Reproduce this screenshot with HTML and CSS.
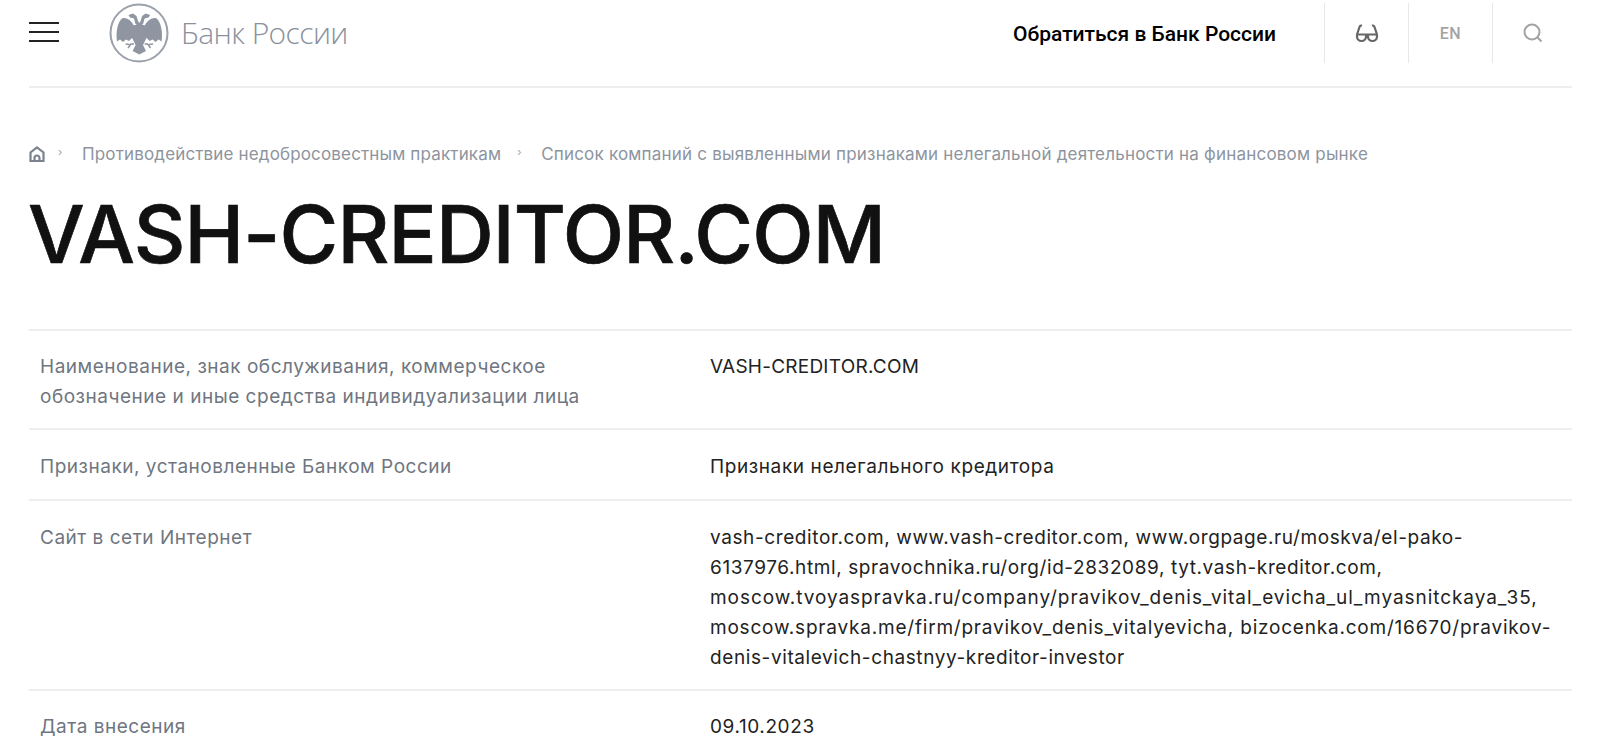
FILE: index.html
```html
<!DOCTYPE html>
<html lang="ru">
<head>
  <meta charset="UTF-8" />
  <title>VASH-CREDITOR.COM</title>
  <link rel="stylesheet" href="styles.css">
</head>
<body>
  <header class="header">
    <div class="header-left">
      <button class="burger"><span></span><span></span><span></span></button>
      <a class="logo">
        <svg class="logo-mark" width="60" height="60" viewBox="0 0 60 60">
          <circle cx="30" cy="30" r="28.5" fill="none" stroke="#9aa1ab" stroke-width="2"/>
          <g fill="#8f96a2">
            <!-- heads -->
            <path d="M30.300 24L26.500 21 25 15.500 21 14.500 19.500 12 24 10.500 27.500 13 29 18 30.300 20 31.600 18 33.100 13 36.600 10.500 41.100 12 39.600 14.500 35.600 15.500 34.100 21z"/>
            <!-- wings -->
            <path d="M25 23C22 17 17 14 13 15.500 9 19 6.500 28 8 38.500L11 36.500 14 39 17 36.500 20 38 25 33z"/>
            <path d="M35.600 23C38.600 17 43.600 14 47.600 15.500 51.600 19 54.100 28 52.600 38.500L49.600 36.500 46.600 39 43.600 36.500 40.600 38 35.600 33z"/>
            <!-- body and tail -->
            <path d="M25 22H35.600L38 34 34 42 37 48 30.300 51.500 23.600 48 26.600 42 22.600 34z"/>
          </g>
          <path d="M19 45l3-4 3 0M16.500 41l4 .5M41.600 45l-3-4-3 0M44.100 41l-4 .5" fill="none" stroke="#8f96a2" stroke-width="1.500"/>
        </svg>
        <span class="logo-text">Банк России</span>
      </a>
    </div>
    <nav class="header-right">
      <a class="contact">Обратиться в Банк России</a>
      <div class="tool">
        <svg width="24" height="20" viewBox="0 0 24 20" fill="none" stroke="#666" stroke-width="2.200">
          <path d="M1.500 11.500h21M2 11.500v2a4.500 4.500 0 0 0 9 0v-2M13 11.500v2a4.500 4.500 0 0 0 9 0v-2"/>
          <path d="M2 11.500L4.500 4q.7-2 2.500-1.300M22 11.500L19.500 4q-.7-2-2.500-1.300"/>
        </svg>
      </div>
      <div class="tool lang">EN</div>
      <div class="tool">
        <svg width="22" height="22" viewBox="0 0 22 22" fill="none" stroke="#a3a3a3" stroke-width="2">
          <circle cx="10" cy="10" r="7.500"/>
          <path d="M15.500 15.500l4 4"/>
        </svg>
      </div>
    </nav>
  </header>

  <main class="content">
    <div class="crumbs">
      <svg class="home" width="16" height="16" viewBox="0 0 16 16" fill="none" stroke="#7b8390" stroke-width="2.200">
        <path d="M1.500 15V6.500L8 1.500l6.500 5V15z"/>
        <path d="M5.500 15v-3a2.500 2.500 0 0 1 5 0v3"/>
      </svg>
      <span class="sep">›</span>
      <a>Противодействие недобросовестным практикам</a>
      <span class="sep">›</span>
      <a class="crumb-long">Список компаний с выявленными признаками нелегальной деятельности на финансовом рынке</a>
    </div>

    <h1>VASH-CREDITOR.COM</h1>

    <div class="rows">
      <div class="row">
        <div class="label">Наименование, знак обслуживания, коммерческое обозначение и иные средства индивидуализации лица</div>
        <div class="value caps">VASH-CREDITOR.COM</div>
      </div>
      <div class="row">
        <div class="label">Признаки, установленные Банком России</div>
        <div class="value">Признаки нелегального кредитора</div>
      </div>
      <div class="row row-long">
        <div class="label">Сайт в сети Интернет</div>
        <div class="value">
          <div>vash-creditor.com, www.vash-creditor.com, www.orgpage.ru/moskva/el-pako-</div>
          <div>6137976.html, spravochnika.ru/org/id-2832089, tyt.vash-kreditor.com,</div>
          <div class="wide">moscow.tvoyaspravka.ru/company/pravikov_denis_vital_evicha_ul_myasnitckaya_35,</div>
          <div class="wider">moscow.spravka.me/firm/pravikov_denis_vitalyevicha, bizocenka.com/16670/pravikov-</div>
          <div>denis-vitalevich-chastnyy-kreditor-investor</div>
        </div>
      </div>
      <div class="row row-last">
        <div class="label">Дата внесения</div>
        <div class="value">09.10.2023</div>
      </div>
    </div>
  </main>
</body>
</html>
```

FILE: styles.css
```css
html, body {
  height: 755px;
  overflow: hidden;
}

body {
  margin: 0;
  padding: 0 28px 0 29px;
  background: #fff;
  color: #111;
  font-family: Inter, "Noto Sans", sans-serif;
}

.header {
  display: flex;
  justify-content: space-between;
  height: 86px;
  border-bottom: 2px solid #eeeeee;
}

.header-left {
  display: flex;
  align-items: center;
  gap: 50px;
  height: 66px;
}

.burger {
  display: flex;
  flex-direction: column;
  gap: 7px;
  width: 30px;
  margin-bottom: 2px;
  padding: 0;
  border: 0;
  background: none;
}

.burger span {
  display: block;
  height: 2px;
  background: #222;
}

.logo {
  display: flex;
  align-items: center;
  gap: 12px;
}

.logo-text {
  margin-bottom: 2px;
  font-family: "Open Sans", sans-serif;
  font-weight: 300;
  font-size: 30px;
  letter-spacing: -0.6px;
  color: #8a919d;
}

.header-right {
  display: flex;
  align-items: center;
  height: 66px;
}

.contact {
  font-family: Roboto, sans-serif;
  font-weight: 500;
  font-size: 21px;
  color: #000;
  margin-top: 2px;
  margin-right: 48px;
}

.tool {
  display: flex;
  align-items: center;
  justify-content: center;
  box-sizing: border-box;
  width: 84px;
  height: 60px;
  border-left: 1px solid #e8e8e8;
}

.tool:last-child {
  width: 80px;
}

.lang {
  font-family: Roboto, sans-serif;
  font-weight: 500;
  font-size: 16px;
  letter-spacing: 0.5px;
  color: #a3a3a3;
}

.crumbs {
  display: flex;
  align-items: center;
  margin-top: 56px;
  height: 20px;
  font-size: 17px;
  letter-spacing: 0.15px;
  color: #8d949e;
}

.sep {
  width: 24px;
  margin-left: 13px;
  margin-bottom: 4px;
  font-size: 11px;
  color: #9aa1ab;
}

.crumbs a {
  margin-right: 3px;
}

.crumbs .crumb-long {
  letter-spacing: 0.2px;
}

h1 {
  margin: 22px 0 0 -1px;
  font-size: 80px;
  line-height: 96px;
  font-weight: 500;
  letter-spacing: -0.8px;
  -webkit-text-stroke: 0.7px #111;
  color: #111;
}

.rows {
  margin-top: 47px;
  border-top: 2px solid #eeeeee;
}

.row {
  display: grid;
  grid-template-columns: 670px 1fr;
  padding: 22px 11px 17px;
  border-bottom: 2px solid #eeeeee;
  font-size: 19px;
  line-height: 29.600px;
}

.row:first-child {
  padding-top: 21px;
}

.row-long {
  padding-bottom: 16px;
  line-height: 30px;
}

.row-last {
  padding-top: 21px;
}

.label {
  max-width: 560px;
  letter-spacing: 0.52px;
  color: #6f7680;
}

.value {
  letter-spacing: 0.6px;
  color: #222;
}

.caps {
  letter-spacing: 0.24px;
}

.wide {
  letter-spacing: 0.94px;
}

.wider {
  letter-spacing: 0.79px;
}
```
